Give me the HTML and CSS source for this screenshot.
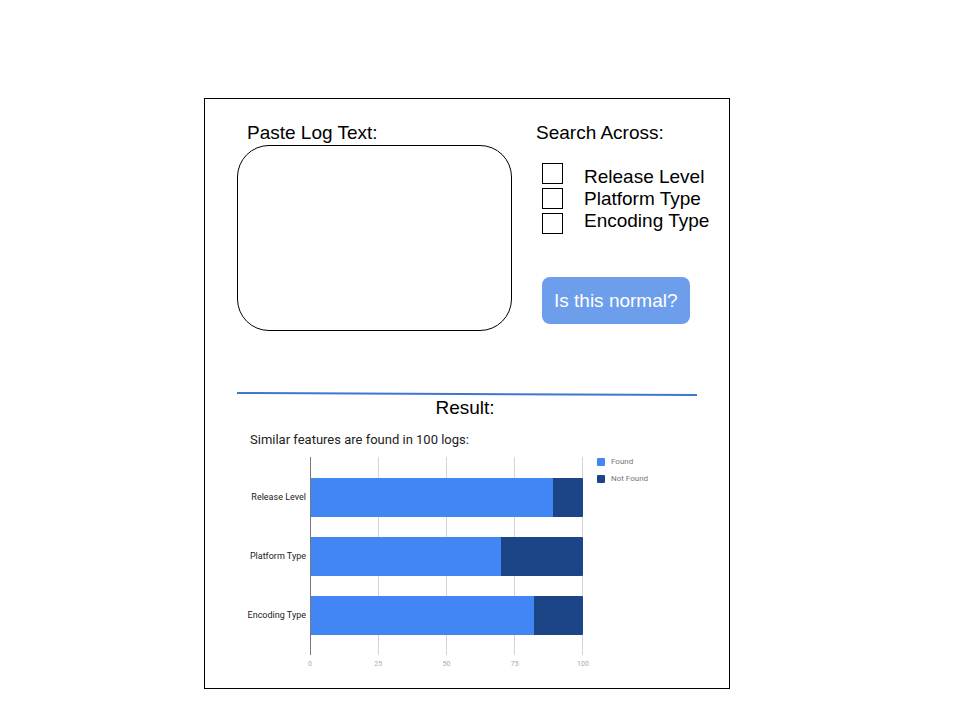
FILE: index.html
```html
<!DOCTYPE html>
<html lang="en">
<head>
  <meta charset="utf-8">
  <title>Log Search</title>
  <link rel="stylesheet" href="styles.css">
</head>
<body>
  <main class="card">
    <form class="search">
      <div class="log">
        <label class="log-label" for="log-text">Paste Log Text:</label>
        <textarea class="log-input" id="log-text"></textarea>
      </div>
      <fieldset class="options">
        <legend class="options-title">Search Across:</legend>
        <div class="choices">
          <div class="boxes">
            <input class="box" type="checkbox" id="release">
            <input class="box" type="checkbox" id="platform">
            <input class="box" type="checkbox" id="encoding">
          </div>
          <div class="box-labels">
            <label for="release">Release Level</label>
            <label for="platform">Platform Type</label>
            <label for="encoding">Encoding Type</label>
          </div>
        </div>
        <button class="submit" type="button">Is this normal?</button>
      </fieldset>
    </form>

    <section class="result">
      <svg class="divider" viewBox="0 0 460 6" preserveAspectRatio="none" aria-hidden="true">
        <line x1="0" y1="2" x2="460" y2="4" stroke="#3c78d0" stroke-width="2"/>
      </svg>
      <h2 class="result-title">Result:</h2>
      <figure class="chart">
        <figcaption class="chart-title">Similar features are found in 100 logs:</figcaption>
        <div class="chart-body">
          <div class="categories">
            <span class="category">Release Level</span>
            <span class="category">Platform Type</span>
            <span class="category">Encoding Type</span>
          </div>
          <div class="plot">
            <div class="gridlines"><i></i><i></i><i></i><i></i></div>
            <div class="bar"><div class="found" style="width: 89%"></div></div>
            <div class="bar"><div class="found" style="width: 70%"></div></div>
            <div class="bar"><div class="found" style="width: 82%"></div></div>
          </div>
          <ul class="key">
            <li class="key-item"><span class="swatch"></span>Found</li>
            <li class="key-item"><span class="swatch swatch-dark"></span>Not Found</li>
          </ul>
          <div class="ticks">
            <span>0</span><span>25</span><span>50</span><span>75</span><span>100</span>
          </div>
        </div>
      </figure>
    </section>
  </main>
</body>
</html>
```
FILE: styles.css
```css
* {
  box-sizing: border-box;
}

body {
  margin: 0;
  padding: 98px 230px 31px 204px;
  background: #fff;
  color: #000;
  font: 19px/22px "Liberation Sans", Arial, sans-serif;
}

.card {
  border: 1px solid #000;
  padding: 23px 0 17px;
}

.search {
  display: grid;
  grid-template-columns: minmax(0, 1fr) 177px;
  column-gap: 24px;
  padding: 0 16px 0 32px;
}

.log {
  display: flex;
  flex-direction: column;
  gap: 1px;
}

.log-label {
  padding-left: 10px;
}

.log-input {
  width: 100%;
  height: 186px;
  padding: 24px;
  border: 1px solid #000;
  border-radius: 32px;
  background: #fff;
  font: inherit;
  resize: none;
}

.options {
  min-width: 0;
  margin: 0;
  padding: 0;
  border: 0;
}

.options-title {
  padding: 0;
}

.choices {
  display: flex;
  gap: 21px;
  padding: 19px 0 0 6px;
}

.boxes {
  display: flex;
  flex-direction: column;
  gap: 4px;
}

.box {
  width: 21px;
  height: 21px;
  margin: 0;
  border: 1px solid #000;
  background: #fff;
  appearance: none;
}

.box:checked {
  background: #6d9eeb;
}

.box-labels {
  display: flex;
  flex-direction: column;
  padding-top: 3px;
  white-space: nowrap;
}

.submit {
  margin: 43px 0 0 6px;
  padding: 13px 12px 12px;
  border: 0;
  border-radius: 8px;
  background: #6d9eeb;
  color: #fff;
  font: inherit;
  white-space: nowrap;
}

.result {
  padding: 60px 32px 0;
}

.divider {
  display: block;
  width: 100%;
  height: 6px;
}

.result-title {
  margin: 0;
  padding-right: 4px;
  font-size: 19px;
  font-weight: 400;
  text-align: center;
}

.chart {
  margin: 0;
  font-family: Roboto, sans-serif;
}

.chart-title {
  padding: 13px 0 9px 13px;
  color: #222;
  font-size: 13px;
  line-height: 16px;
}

.chart-body {
  display: grid;
  grid-template-columns: 69px minmax(0, 1fr) 100px;
  column-gap: 4px;
  font-size: 8px;
}

.categories,
.plot {
  display: flex;
  flex-direction: column;
  gap: 20px;
  padding: 21px 0 20px;
}

.category {
  height: 39px;
  color: #222;
  font-size: 9px;
  line-height: 39px;
  text-align: right;
  white-space: nowrap;
}

.plot {
  position: relative;
  margin-right: 10px;
  border-left: 1px solid #777;
}

.gridlines {
  position: absolute;
  inset: 0;
  display: grid;
  grid-template-columns: repeat(4, 1fr);
}

.gridlines i {
  border-right: 1px solid #d4d4d4;
}

.bar {
  position: relative;
  height: 39px;
  border-radius: 1px;
  background: #1c4587;
  overflow: hidden;
}

.found {
  height: 100%;
  background: #4285f4;
}

.key {
  margin: 0;
  padding: 0;
  color: #757575;
  list-style: none;
}

.key-item {
  display: flex;
  align-items: center;
  gap: 6px;
  height: 17px;
  padding-bottom: 7px;
}

.swatch {
  width: 8px;
  height: 8px;
  border-radius: 1px;
  background: #4285f4;
}

.swatch-dark {
  background: #1c4587;
}

.ticks {
  grid-column: 2;
  display: flex;
  justify-content: space-between;
  margin: 3px 0 0 -10px;
  color: #aaa;
  font-size: 7px;
  line-height: 13px;
  text-align: center;
}

.ticks span {
  width: 20px;
}
```
